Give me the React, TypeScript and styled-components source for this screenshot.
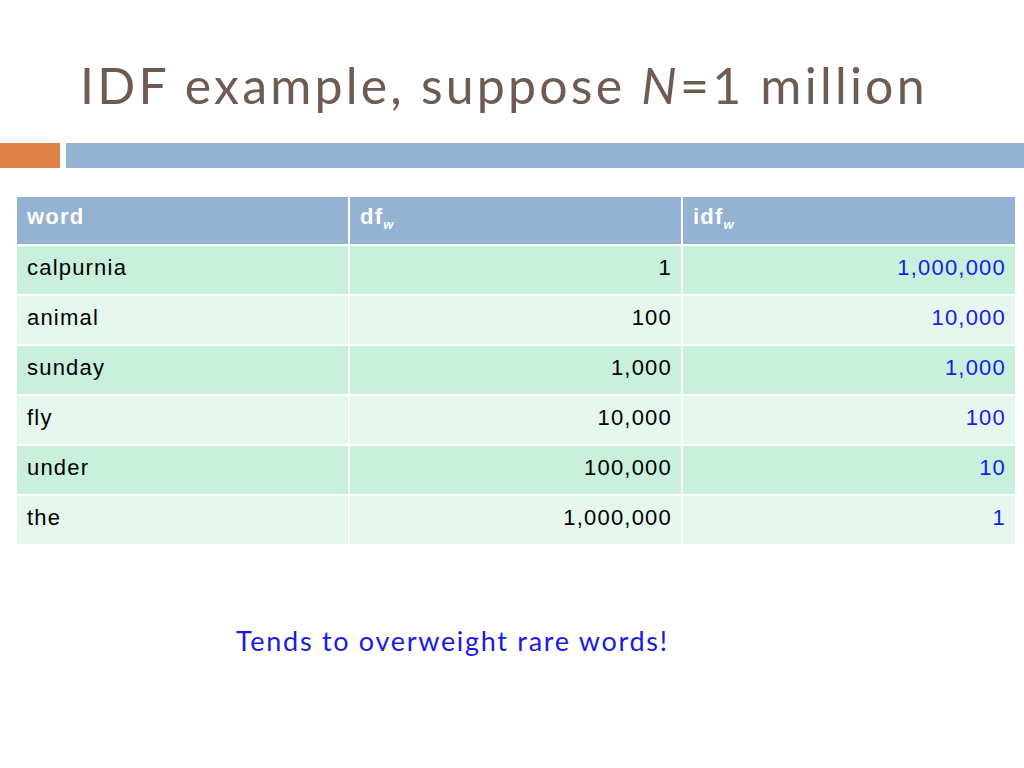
import React from "react";
import styled, { createGlobalStyle } from "styled-components";

const G = createGlobalStyle`
  html, body { margin: 0; padding: 0; background: #fff; }
  body { width: 1024px; height: 768px; overflow: hidden; }
`;
const Page = styled.div`width:1024px;height:768px;display:flex;flex-direction:column;`;
const Title = styled.h1`
  margin: 0; padding: 52px 0 0 80px; height: 91px; box-sizing: border-box;
  font-family: Lato, "Open Sans", sans-serif; font-weight: 400; font-size: 50px; line-height: 66px;
  color: #6e5c52; letter-spacing: 3.2px; white-space: nowrap;
  i { font-style: italic; }
`;
const Bars = styled.div`display:flex;gap:6px;height:25px;margin-top:52px;`;
const Bar = styled.div<{ $w?: number; $c: string }>`
  background:${p => p.$c}; ${p => (p.$w ? `width:${p.$w}px;` : "flex:1;")}
`;
const Table = styled.div`
  margin: 29px 0 0 17px; width: 998px;
  display: grid; grid-template-columns: 333px 333px 332px;
  font-family: "Liberation Sans", Arial, sans-serif; font-size: 22px; letter-spacing: 1.2px;
`;
const Cell = styled.div<{ $bg: string; $right?: boolean; $head?: boolean; $blue?: boolean; $h: number }>`
  height: ${p => p.$h}px; box-sizing: border-box; background: ${p => p.$bg};
  border-right: 2px solid #fff; border-bottom: 2px solid #fff;
  padding: ${p => (p.$head ? "7px" : "9px")} 9px 0 10px;
  text-align: ${p => (p.$right ? "right" : "left")};
  color: ${p => (p.$head ? "#fff" : p.$blue ? "#1a1ae6" : "#000")};
  font-weight: ${p => (p.$head ? 700 : 400)};
  &:nth-child(3n) { border-right: none; }
  sub { font-size: 13px; font-style: italic; vertical-align: -5px; }
`;
const Note = styled.div`
  margin: 78px 0 0 236px; font-family: Lato, "Open Sans", sans-serif; font-size: 27px;
  color: #1a1ae6; letter-spacing: 1.7px; white-space: nowrap;
`;

const rows = [
  ["calpurnia", "1", "1,000,000"],
  ["animal", "100", "10,000"],
  ["sunday", "1,000", "1,000"],
  ["fly", "10,000", "100"],
  ["under", "100,000", "10"],
  ["the", "1,000,000", "1"],
];

export default function App() {
  return (
    <Page>
      <G />
      <Title>IDF example, suppose <i>N</i>=1 million</Title>
      <Bars><Bar $w={60} $c="#df8248" /><Bar $c="#94b3d2" /></Bars>
      <Table>
        <Cell $head $h={49} $bg="#94b3d2">word</Cell>
        <Cell $head $h={49} $bg="#94b3d2">df<sub>w</sub></Cell>
        <Cell $head $h={49} $bg="#94b3d2">idf<sub>w</sub></Cell>
        {rows.map((r, i) => {
          const bg = i % 2 === 0 ? "#c8f0dc" : "#e6f7ee";
          return (
            <React.Fragment key={r[0]}>
              <Cell $h={50} $bg={bg}>{r[0]}</Cell>
              <Cell $h={50} $bg={bg} $right>{r[1]}</Cell>
              <Cell $h={50} $bg={bg} $right $blue>{r[2]}</Cell>
            </React.Fragment>
          );
        })}
      </Table>
      <Note>Tends to overweight rare words!</Note>
    </Page>
  );
}
